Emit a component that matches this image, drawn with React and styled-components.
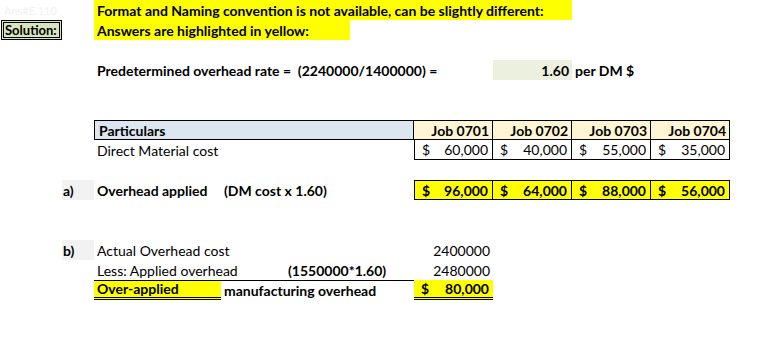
import React from "react";
import styled, { createGlobalStyle } from "styled-components";

const GlobalStyle = createGlobalStyle`
  html, body {
    margin: 0;
    padding: 0;
    background: #ffffff;
  }
  body {
    font-family: Lato, "Open Sans", sans-serif;
    font-size: 14px;
    color: #000;
  }
`;

const Sheet = styled.div`
  display: grid;
  grid-template-columns: 62px 32px 127px 64px 65px 64px repeat(4, 79px) 1fr;
  grid-template-rows: repeat(16, 20px);
  width: 759px;
  height: 341px;
`;

const Cell = styled.div`
  grid-column: ${(p) => p.$col};
  grid-row: ${(p) => p.$row};
  display: flex;
  align-items: center;
  justify-content: ${(p) => (p.$right ? "flex-end" : "flex-start")};
  padding: 0 3px;
  white-space: nowrap;
  font-weight: ${(p) => (p.$bold ? 700 : 400)};
  background: ${(p) => p.$bg || "transparent"};
  min-width: 0;
  overflow: visible;
`;

const Ghost = styled(Cell)`
  color: #f1f1f1;
  font-size: 11px;
  padding-left: 4px;
`;

const SolutionBox = styled(Cell)`
  margin-left: 1px;
  border: 3px double #000;
  background: #d8e4bc;
  font-weight: 700;
  font-size: 13px;
  padding: 0 1px;
`;

const Boxed = styled(Cell)`
  border: 1px solid #000;
  border-left-width: ${(p) => (p.$first ? "1px" : "0")};
  border-top-width: ${(p) => (p.$noTop ? "0" : "1px")};
  padding: 0 3px 0 4px;
`;

const Money = styled(Boxed)`
  justify-content: space-between;
  padding: 0 4px 0 7px;
`;

const Label = styled(Cell)`
  background: #f2f2f2;
  font-weight: 700;
  padding-left: 1px;
`;

const TotalLine = styled.div`
  grid-column: 3 / 7;
  grid-row: 15;
  border-top: 1px solid #000;
  z-index: 1;
`;

const Underlined = styled(Cell)`
  border-bottom: 3px double #000;
`;

const MoneyTotal = styled(Underlined)`
  justify-content: space-between;
  padding: 0 4px 0 7px;
`;

const jobs = ["Job 0701", "Job 0702", "Job 0703", "Job 0704"];
const material = ["60,000", "40,000", "55,000", "35,000"];
const applied = ["96,000", "64,000", "88,000", "56,000"];

function Amount({ value, row, col, bold, bg, first, noTop }) {
  return (
    <Money $row={row} $col={col} $bold={bold} $bg={bg} $first={first} $noTop={noTop}>
      <span>$</span>
      <span>{value}</span>
    </Money>
  );
}

export default function App() {
  return (
    <>
      <GlobalStyle />
      <Sheet>
        <Ghost $row={1} $col="1 / 2">Ans#E.110</Ghost>
        <Cell $row={1} $col="3 / 9" $bold $bg="#ffff00">
          Format and Naming convention is not available, can be slightly different:
        </Cell>
        <SolutionBox $row={2} $col="1 / 2">Solution:</SolutionBox>
        <Cell $row={2} $col="3 / 6" $bold $bg="#ffff00">
          Answers are highlighted in yellow:
        </Cell>

        <Cell $row={4} $col="3 / 7" $bold>
          Predetermined overhead rate =&nbsp; (2240000/1400000) =
        </Cell>
        <Cell $row={4} $col="8 / 9" $bold $right $bg="#ebf1de">
          1.60
        </Cell>
        <Cell $row={4} $col="9 / 10" $bold>
          per DM $
        </Cell>

        <Boxed $row={7} $col="3 / 7" $bold $first $bg="#dce6f1">
          Particulars
        </Boxed>
        {jobs.map((j, i) => (
          <Boxed key={j} $row={7} $col={`${7 + i} / ${8 + i}`} $bold $right $bg="#fdf5d3">
            {j}
          </Boxed>
        ))}

        <Cell $row={8} $col="3 / 4">Direct Material cost</Cell>
        {material.map((v, i) => (
          <Amount key={v} value={v} row={8} col={`${7 + i} / ${8 + i}`} first={i === 0} noTop />
        ))}

        <Label $row={10} $col="2 / 3">a)</Label>
        <Cell $row={10} $col="3 / 4" $bold>Overhead applied</Cell>
        <Cell $row={10} $col="4 / 6" $bold>(DM cost x 1.60)</Cell>
        {applied.map((v, i) => (
          <Amount key={v} value={v} row={10} col={`${7 + i} / ${8 + i}`} bold bg="#ffff00" first={i === 0} />
        ))}

        <Label $row={13} $col="2 / 3">b)</Label>
        <Cell $row={13} $col="3 / 4">Actual Overhead cost</Cell>
        <Cell $row={13} $col="7 / 8" $right>2400000</Cell>

        <Cell $row={14} $col="3 / 4">Less: Applied overhead</Cell>
        <Cell $row={14} $col="5 / 7" $bold>(1550000*1.60)</Cell>
        <Cell $row={14} $col="7 / 8" $right>2480000</Cell>

        <Underlined $row={15} $col="3 / 4" $bold $bg="#ffff00">Over-applied</Underlined>
        <Cell $row={15} $col="4 / 7" $bold>manufacturing overhead</Cell>
        <MoneyTotal $row={15} $col="7 / 8" $bold $bg="#ffff00">
          <span>$</span>
          <span>80,000</span>
        </MoneyTotal>
        <TotalLine />
      </Sheet>
    </>
  );
}
